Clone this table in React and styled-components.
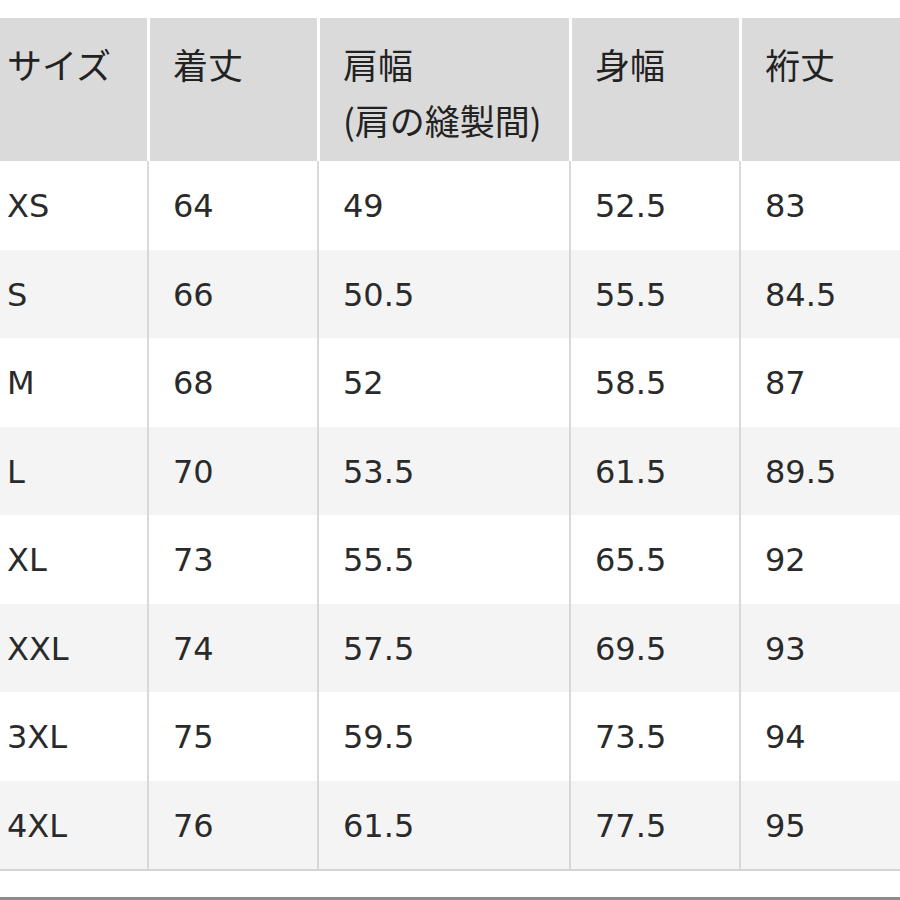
import styled, { createGlobalStyle } from "styled-components";

const GlobalStyle = createGlobalStyle`
    html, body {
        margin: 0;
        padding: 0;
        background: #ffffff;
    }
    body {
        font-family: "DejaVu Sans", "Noto Sans CJK JP", sans-serif;
        color: #222222;
    }
`;

const Page = styled.div`
    width: 900px;
    height: 900px;
    overflow: hidden;
    padding-top: 18px;
    box-sizing: border-box;
    display: flex;
    flex-direction: column;
`;

const Table = styled.div`
    display: grid;
    grid-template-columns: 147px 170px 252px 170px 1fr;
    border-bottom: 2px solid #d4d4d4;
`;

const HeadCell = styled.div`
    box-sizing: border-box;
    height: 143px;
    background: #dadada;
    border-left: ${({ $first }) => ($first ? "none" : "3px solid #ffffff")};
    padding: 18px 0 0 ${({ $first }) => ($first ? "7px" : "23px")};
    font-family: "Noto Sans CJK JP", sans-serif;
    font-size: 35px;
    line-height: 56px;
    font-weight: 400;
    white-space: nowrap;
`;

const Cell = styled.div`
    box-sizing: border-box;
    height: 88.5px;
    display: flex;
    align-items: center;
    background: ${({ $shade }) => ($shade ? "#f4f4f4" : "#ffffff")};
    border-left: ${({ $first }) => ($first ? "none" : "2px solid #d9d9d9")};
    padding-left: ${({ $first }) => ($first ? "7px" : "24px")};
    padding-top: 2px;
    font-size: 32px;
    color: #2a2a2a;
    white-space: nowrap;
`;

const Footer = styled.div`
    flex: 1;
    display: flex;
    align-items: flex-end;
`;

const FooterLine = styled.div`
    width: 100%;
    height: 3px;
    background: #8c8c8c;
`;

const headers = [
    ["サイズ"],
    ["着丈"],
    ["肩幅", "(肩の縫製間)"],
    ["身幅"],
    ["裄丈"],
];

const rows = [
    ["XS", "64", "49", "52.5", "83"],
    ["S", "66", "50.5", "55.5", "84.5"],
    ["M", "68", "52", "58.5", "87"],
    ["L", "70", "53.5", "61.5", "89.5"],
    ["XL", "73", "55.5", "65.5", "92"],
    ["XXL", "74", "57.5", "69.5", "93"],
    ["3XL", "75", "59.5", "73.5", "94"],
    ["4XL", "76", "61.5", "77.5", "95"],
];

function App() {
    return (
        <>
            <GlobalStyle />
            <Page>
                <Table>
                    {headers.map((lines, i) => (
                        <HeadCell key={i} $first={i === 0}>
                            {lines.map((line) => (
                                <div key={line}>{line}</div>
                            ))}
                        </HeadCell>
                    ))}
                    {rows.map((row, r) =>
                        row.map((value, c) => (
                            <Cell
                                key={`${r}-${c}`}
                                $first={c === 0}
                                $shade={r % 2 === 1}
                            >
                                {value}
                            </Cell>
                        ))
                    )}
                </Table>
                <Footer>
                    <FooterLine />
                </Footer>
            </Page>
        </>
    );
}

export default App;
